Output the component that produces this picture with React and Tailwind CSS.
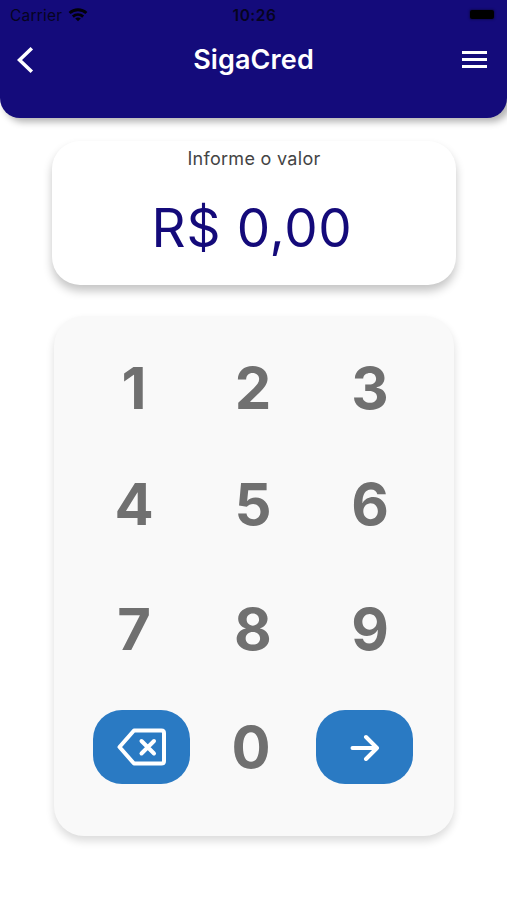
import React, { useState } from "react";

const rows = [
  { digits: ["1", "2", "3"], height: "h-[116px]" },
  { digits: ["4", "5", "6"], height: "h-[116px]" },
  { digits: ["7", "8", "9"], height: "h-[133px]" },
];

const keyClass = "h-full flex items-center justify-center";
const actionClass =
  "w-[97px] h-[74px] rounded-[29px] bg-[#2a7ac3] flex items-center justify-center";

const App = () => {
  const [cents, setCents] = useState(0);

  const addDigit = (digit) => {
    setCents((prev) => (prev > 9999999 ? prev : prev * 10 + Number(digit)));
  };

  const removeDigit = () => setCents((prev) => Math.floor(prev / 10));

  const amount = (cents / 100).toFixed(2).replace(".", ",");

  return (
    <div className="w-[507px] h-[900px] overflow-hidden bg-white font-['Inter',sans-serif]">
      {/* Header */}
      <header className="h-[118px] rounded-b-[20px] bg-[#140b7b] shadow-[4px_4px_7px_rgba(0,0,0,0.3)]">
        {/* Status bar */}
        <div className="h-[30px] pl-[10px] pr-[13px] grid grid-cols-3 items-center text-[#06041f]">
          <div className="flex items-center gap-[6px]">
            <span className="pt-px text-[15.5px] leading-[29px] tracking-[0.2px]">Carrier</span>
            <svg width="20" height="14" viewBox="0 0 21 15" fill="none" stroke="#020108" strokeWidth="3.1">
              <path d="M1.5 5.4C6.6 0.7 14.4 0.7 19.5 5.4" />
              <path d="M5 9.2C8.2 6.4 12.8 6.4 16 9.2" />
              <path d="M10.5 14.3L7.5 11.3C9.2 9.8 11.8 9.8 13.5 11.3Z" fill="#020108" stroke="none" />
            </svg>
          </div>
          <span className="pl-[5px] pt-px text-center text-[15.5px] leading-[29px] font-semibold tracking-[0.5px]">
            10:26
          </span>
          <div className="justify-self-end mb-[2px] w-[24px] h-[9px] rounded-[2px] bg-black shadow-[0_0_2px_1px_rgba(0,0,0,0.3)]" />
        </div>

        {/* Title bar */}
        <div className="h-[60px] pl-[17px] pr-[20px] flex items-center justify-between text-white">
          <button aria-label="Voltar">
            <svg width="17" height="28" viewBox="0 0 17 28" fill="none" stroke="currentColor" strokeWidth="3.6">
              <path d="M14.8 2.2L2.5 14L14.8 25.8" />
            </svg>
          </button>
          <h1 className="pl-[11px] text-[27px] leading-[32px] font-semibold tracking-[0.1px]">SigaCred</h1>
          <button aria-label="Menu" className="mb-[2px] w-[25px] flex flex-col gap-[4px]">
            <span className="h-[3px] bg-white" />
            <span className="h-[3px] bg-white" />
            <span className="h-[3px] bg-white" />
          </button>
        </div>
      </header>

      {/* Amount */}
      <section className="mt-[23px] ml-[52px] w-[404px] h-[144px] rounded-[28px] bg-white shadow-[0_6px_10px_rgba(0,0,0,0.23)] flex flex-col items-center">
        <p className="mt-[6px] text-[18px] leading-[24px] tracking-[0.3px] text-[#444444]">
          Informe o valor
        </p>
        <p className="mt-[27px] pr-[4px] text-[53px] leading-[60px] tracking-[0.7px] text-[#140a7a]">
          R$ {amount}
        </p>
      </section>

      {/* Keypad */}
      <section className="mt-[31px] ml-[54px] w-[400px] h-[520px] pt-[14px] rounded-[30px] bg-[#f9f9f9] shadow-[0_5px_9px_rgba(0,0,0,0.14)] text-[58px] leading-none font-bold text-[#707070]">
        {rows.map((row) => (
          <div
            key={row.digits[0]}
            className={`grid grid-cols-[118px_120px_114px] pl-[21px] ${row.height}`}
          >
            {row.digits.map((digit) => (
              <button key={digit} className={keyClass} onClick={() => addDigit(digit)}>
                {digit}
              </button>
            ))}
          </div>
        ))}
        <div className="h-[103px] pl-[39px] flex items-center">
          <button aria-label="Apagar" className={actionClass} onClick={removeDigit}>
            <svg width="50" height="38" viewBox="0 0 50 38" fill="none" stroke="white" strokeWidth="4" strokeLinejoin="round" strokeLinecap="round">
              <path d="M17 2.5H44.5Q47 2.5 47 5V33Q47 35.5 44.5 35.5H17L2.5 19Z" />
              <path d="M24.5 13L37 25.5M37 13L24.5 25.5" />
            </svg>
          </button>
          <button className="w-[126px] h-full flex items-center justify-center pr-[4px]" onClick={() => addDigit("0")}>
            0
          </button>
          <button aria-label="Continuar" className={actionClass}>
            <svg width="30" height="28" viewBox="0 0 30 28" fill="none" stroke="white" strokeWidth="4" strokeLinejoin="round" strokeLinecap="round">
              <path d="M2.5 15H27M16 4L27 15L16 26" />
            </svg>
          </button>
        </div>
      </section>
    </div>
  );
};

export default App;
